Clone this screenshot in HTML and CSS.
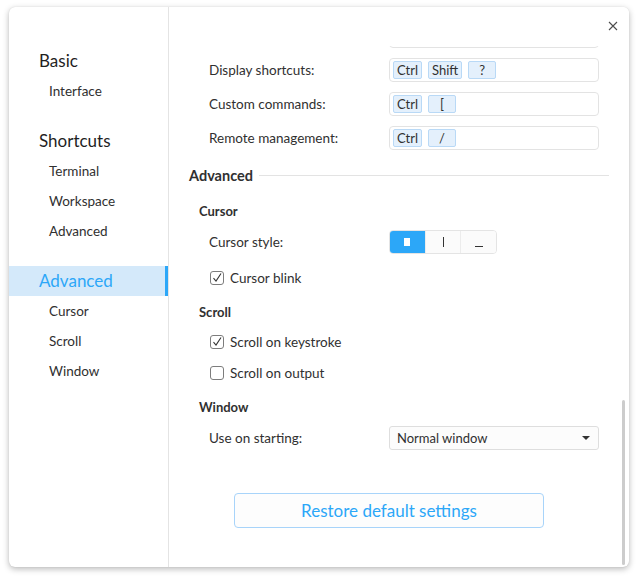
FILE: index.html
```html
<!DOCTYPE html>
<html>
<head>
<meta charset="utf-8">
<link rel="stylesheet" href="styles.css">
</head>
<body>
<div class="window">
  <nav class="sidebar">
    <div class="group">
      <div class="group-title">Basic</div>
      <div class="nav-item">Interface</div>
    </div>
    <div class="group">
      <div class="group-title">Shortcuts</div>
      <div class="nav-item">Terminal</div>
      <div class="nav-item">Workspace</div>
      <div class="nav-item">Advanced</div>
    </div>
    <div class="group">
      <div class="group-title active">Advanced</div>
      <div class="nav-item">Cursor</div>
      <div class="nav-item">Scroll</div>
      <div class="nav-item">Window</div>
    </div>
  </nav>
  <main class="content">
    <div class="titlebar">
      <button class="close" aria-label="Close">
        <svg width="10" height="10" viewBox="0 0 10 10"><path d="M1 1L9 9M9 1L1 9" stroke="#4d4d4d" stroke-width="1.1" fill="none"/></svg>
      </button>
    </div>
    <div class="scroll">
      <div class="scroll-inner">
        <div class="row first">
          <span class="label"></span>
          <div class="keybox"></div>
        </div>
        <div class="row">
          <span class="label">Display shortcuts:</span>
          <div class="keybox"><span class="key">Ctrl</span><span class="key">Shift</span><span class="key">?</span></div>
        </div>
        <div class="row">
          <span class="label">Custom commands:</span>
          <div class="keybox"><span class="key">Ctrl</span><span class="key">[</span></div>
        </div>
        <div class="row">
          <span class="label">Remote management:</span>
          <div class="keybox"><span class="key">Ctrl</span><span class="key">/</span></div>
        </div>

        <div class="section-title"><span>Advanced</span><i class="rule"></i></div>

        <div class="sub-title sub-cursor">Cursor</div>
        <div class="row row-style">
          <span class="label">Cursor style:</span>
          <div class="segmented">
            <span class="seg on"><i class="shape-block"></i></span>
            <span class="seg"><i class="shape-ibeam"></i></span>
            <span class="seg"><i class="shape-under"></i></span>
          </div>
        </div>
        <label class="check c-blink"><span class="box checked"><svg width="12" height="12" viewBox="0 0 12 12"><path d="M2.5 6.2L5 9L10 1.5" stroke="#333" stroke-width="1.1" fill="none"/></svg></span>Cursor blink</label>

        <div class="sub-title sub-scroll">Scroll</div>
        <label class="check c-key"><span class="box checked"><svg width="12" height="12" viewBox="0 0 12 12"><path d="M2.5 6.2L5 9L10 1.5" stroke="#333" stroke-width="1.1" fill="none"/></svg></span>Scroll on keystroke</label>
        <label class="check c-out"><span class="box"></span>Scroll on output</label>

        <div class="sub-title sub-window">Window</div>
        <div class="row row-start">
          <span class="label">Use on starting:</span>
          <div class="select"><span>Normal window</span><i class="caret"></i></div>
        </div>

        <button class="restore">Restore default settings</button>
      </div>
      <div class="scrollbar"></div>
    </div>
  </main>
</div>
</body>
</html>
```
FILE: styles.css
```css
* { box-sizing: border-box; }
html, body { margin: 0; padding: 0; }
body {
  width: 638px;
  height: 578px;
  background: #ffffff;
  font-family: Lato, "Noto Sans", sans-serif;
  color: #303030;
  padding: 7px 9px 0 9px;
}
.window {
  width: 620px;
  height: 560px;
  background: #fff;
  border-radius: 6px;
  box-shadow: 0 2px 6px rgba(0,0,0,0.28), 0 0 1px rgba(0,0,0,0.15);
  display: flex;
  overflow: hidden;
}
.sidebar {
  width: 160px;
  border-right: 1px solid #e4e4e4;
  padding-top: 39px;
  flex-shrink: 0;
}
.group { margin-bottom: 20px; }
.group-title {
  height: 30px;
  line-height: 30px;
  padding-left: 30px;
  font-size: 17px;
  color: #1f1f1f;
}
.group-title.active {
  background: #d4e9fa;
  color: #2ca7f8;
  box-shadow: inset -3px 0 0 #2ca7f8;
}
.nav-item {
  height: 30px;
  line-height: 30px;
  padding-left: 40px;
  font-size: 13.5px;
  color: #303030;
}
.content {
  flex: 1;
  display: flex;
  flex-direction: column;
  position: relative;
  min-width: 0;
}
.titlebar {
  height: 39px;
  flex-shrink: 0;
  position: relative;
  background: #fff;
  z-index: 2;
}
.close {
  position: absolute;
  top: 9px;
  right: 6px;
  width: 20px;
  height: 20px;
  border: 0;
  background: transparent;
  padding: 0;
  display: flex;
  align-items: center;
  justify-content: center;
}
.scroll {
  flex: 1;
  overflow: hidden;
  position: relative;
}
.scroll-inner {
  margin-top: -22px;
}
.row {
  display: flex;
  align-items: center;
  height: 24px;
  margin-bottom: 10px;
  padding-left: 40px;
}
.label {
  width: 180px;
  font-size: 13.5px;
  flex-shrink: 0;
}
.keybox {
  width: 210px;
  height: 24px;
  border: 1px solid #e3e3e3;
  border-radius: 4px;
  display: flex;
  align-items: center;
  gap: 6px;
  padding-left: 3px;
}
.key {
  min-width: 28px;
  height: 18px;
  padding: 0 3px;
  background: #e4f0fc;
  border: 1px solid #b9d9f6;
  border-radius: 2px;
  font-size: 13px;
  line-height: 16px;
  text-align: center;
  color: #303030;
}
.section-title {
  display: flex;
  align-items: center;
  height: 20px;
  margin-top: 15px;
  padding: 0 20px;
  font-size: 14.5px;
  font-weight: bold;
  color: #303030;
}
.section-title .rule {
  flex: 1;
  height: 1px;
  background: #e3e3e3;
  margin-left: 6px;
}
.sub-title {
  height: 20px;
  line-height: 20px;
  padding-left: 30px;
  font-size: 13px;
  font-weight: bold;
}
.sub-cursor { margin-top: 16px; }
.row-style { margin-top: 9px; margin-bottom: 0; }
.segmented {
  display: flex;
  width: 108px;
  height: 24px;
  border: 1px solid #e4e4e4;
  border-radius: 4px;
  overflow: hidden;
}
.seg {
  flex: 1;
  display: flex;
  align-items: center;
  justify-content: center;
  border-left: 1px solid #ececec;
  background: #fbfbfb;
}
.seg:first-child { border-left: 0; }
.seg.on { background: #2ca7f8; }
.shape-block { width: 6px; height: 8px; background: #fff; }
.shape-ibeam { width: 1px; height: 10px; background: #333; }
.shape-under { width: 8px; height: 1px; background: #333; margin-top: 9px; }
.check {
  display: flex;
  align-items: center;
  height: 24px;
  padding-left: 41px;
  font-size: 13.5px;
}
.box {
  width: 14px;
  height: 14px;
  border: 1px solid #7d7d7d;
  border-radius: 3px;
  margin-right: 6px;
  display: flex;
  align-items: center;
  justify-content: center;
  background: #fff;
}
.c-blink { margin-top: 12px; }
.sub-scroll { margin-top: 12px; }
.c-key { margin-top: 8px; }
.c-out { margin-top: 7px; }
.sub-window { margin-top: 12px; }
.row-start { margin-top: 9px; margin-bottom: 0; }
.select {
  width: 210px;
  height: 24px;
  border: 1px solid #dedede;
  border-radius: 3px;
  background: #fcfcfc;
  display: flex;
  align-items: center;
  justify-content: space-between;
  padding: 0 8px 0 7px;
  font-size: 13px;
}
.caret {
  width: 0;
  height: 0;
  border-left: 4px solid transparent;
  border-right: 4px solid transparent;
  border-top: 4px solid #333;
}
.restore {
  display: block;
  margin: 43px 0 0 65px;
  width: 310px;
  height: 35px;
  border: 1px solid #a8d4fa;
  border-radius: 4px;
  background: #fdfdfd;
  color: #2ca7f8;
  font-family: inherit;
  font-size: 17px;
}
.scrollbar {
  position: absolute;
  right: 4px;
  top: 354px;
  width: 3px;
  height: 165px;
  border-radius: 2px;
  background: #cccccc;
}
```
